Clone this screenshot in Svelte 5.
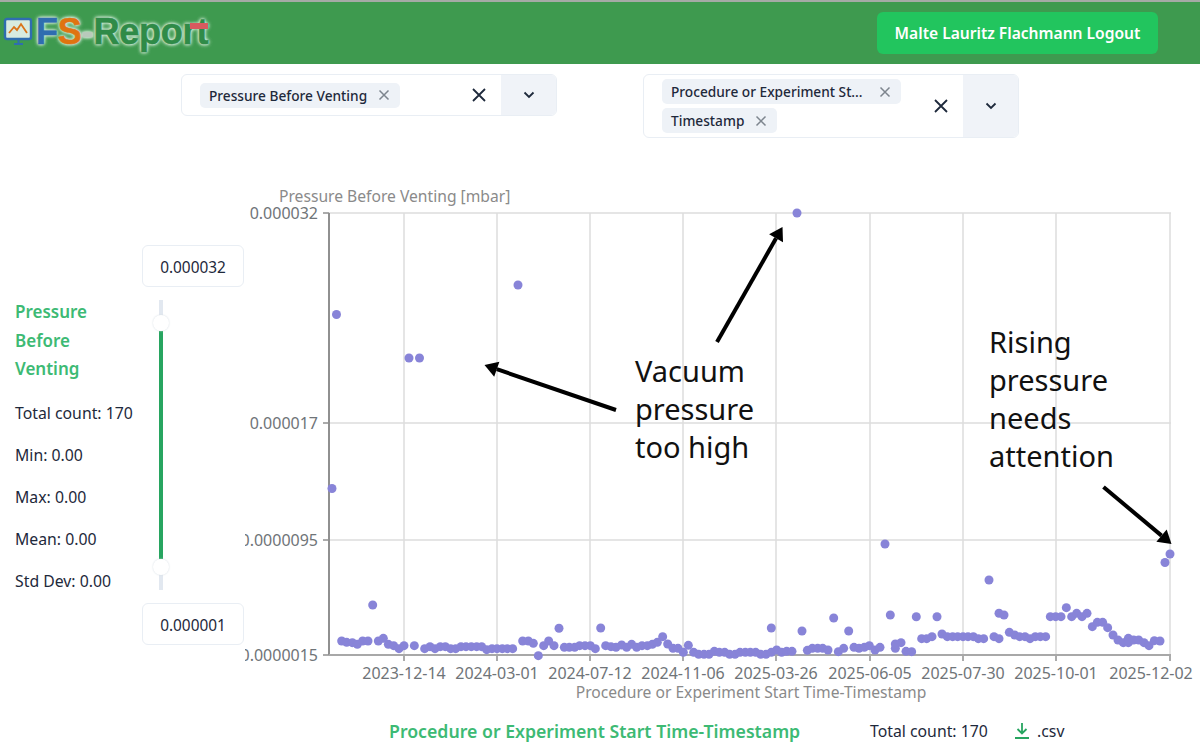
<script lang="ts">
	const toPts = (ox: number, oy: number, list: number[][]) =>
		list.map(([x, y]) => [ox + x / 3, oy + y / 3]);

	const outliers = [
		[332, 488.5], [336.5, 314.5], [409, 358], [419.5, 358], [518, 285], [797, 213], [885, 544], [989, 580],
		[1165, 562.5], [1170, 554], [372.7, 605], [559, 628.3], [600.7, 628], [771.3, 628], [802, 631],
		[833.7, 618], [848.7, 631], [890.3, 615], [916.3, 616.7], [937, 616.7], [999, 613.3], [1004, 615]
	];

	const points = [
		...outliers,
		...toPts(320, 590, [
			[65,153],[80,157],[97,158],[112,163],[128,153],[144,153],[175,153],[190,145],[205,163],[221,167],
			[237,176],[252,167],[283,167],[314,176],[330,170],[345,176],[361,170],[376,170],[392,176],[407,176],
			[423,170],[438,170],[454,170],[470,170],[485,170],[500,179],[516,176],[531,176],[547,176],[562,176],
			[578,176],[608,153],[625,153],[640,160],[655,197],[671,167],[686,153],[702,167],[733,172],[748,172],
			[764,172],[779,167],[795,167],[811,167],[826,176],[857,167],[873,170],[888,172]
		]),
		...toPts(620, 590, [
			[5,165],[20,172],[35,163],[50,172],[66,167],[82,167],[97,163],[112,157],[128,140],[143,162],
			[159,175],[174,175],[190,187],[205,166],[221,187],[236,193],[252,193],[267,193],[283,184],[298,187],
			[314,187],[329,193],[345,193],[360,187],[376,187],[391,187],[407,187],[422,193],[438,193],[454,187],
			[470,180],[485,187],[500,184],[516,184],[562,181],[577,175],[593,175],[608,175],[624,180],[655,185],
			[671,175],[702,172],[717,175],[733,172],[748,167],[765,180],[780,172],[826,175],[826,162],[843,158],[858,184]
		]),
		...toPts(910, 590, [
			[5,185],[35,146],[50,146],[66,140],[96,132],[112,140],[128,140],[143,140],[159,140],[174,140],
			[190,140],[205,146],[221,146],[252,140],[267,146],[298,127],[314,135],[329,140],[345,140],[360,146],
			[376,140],[391,140],[407,140],[421,80],[437,80],[453,80],[469,53],[485,80],[500,70],[516,80],
			[531,70],[547,110],[562,97],[578,97],[593,113],[609,135],[624,150],[640,158],[655,145],[655,158],
			[671,150],[686,150],[702,158],[717,167],[733,152],[750,153]
		])
	];

	// chart svg starts at page x 245, y 180
	const ox = 245;
	const oy = 180;
	const left = 329 - ox;
	const right = 1171 - ox;
	const top = 213 - oy;
	const bottom = 655 - oy;

	const xTicks = [
		{ x: 404, cx: 404, label: '2023-12-14' },
		{ x: 497, cx: 497, label: '2024-03-01' },
		{ x: 590, cx: 590, label: '2024-07-12' },
		{ x: 683, cx: 683, label: '2024-11-06' },
		{ x: 776, cx: 776, label: '2025-03-26' },
		{ x: 870, cx: 870, label: '2025-06-05' },
		{ x: 963, cx: 963, label: '2025-07-30' },
		{ x: 1056, cx: 1056, label: '2025-10-01' },
		{ x: 1170, cx: 1151, label: '2025-12-02' }
	];
	const yTicks = [
		{ y: 213, label: '0.000032' },
		{ y: 423, label: '0.000017' },
		{ y: 540, label: '0.0000095' },
		{ y: 655, label: '0.0000015' }
	];

	const arrows = [
		{ x1: 616, y1: 410, x2: 484.5, y2: 365 },
		{ x1: 717, y1: 342, x2: 782.5, y2: 227 },
		{ x1: 1103.5, y1: 487, x2: 1171.5, y2: 544 }
	];
	// shaft stops short of the tip, head is a filled triangle
	const arrowParts = arrows.map((a) => {
		const len = Math.hypot(a.x2 - a.x1, a.y2 - a.y1);
		const ux = (a.x2 - a.x1) / len;
		const uy = (a.y2 - a.y1) / len;
		const bx = a.x2 - ux * 13;
		const by = a.y2 - uy * 13;
		return {
			sx: a.x1 - ox,
			sy: a.y1 - oy,
			ex: bx - ox,
			ey: by - oy,
			head: [
				[a.x2 - ox, a.y2 - oy],
				[bx - uy * 8 - ox, by + ux * 8 - oy],
				[bx + uy * 8 - ox, by - ux * 8 - oy]
			]
				.map((p) => p.join(','))
				.join(' ')
		};
	});
</script>

<header class="topbar">
	<div class="logo">
		<svg class="logo-icon" width="30" height="30" viewBox="0 0 30 30">
			<rect x="2" y="2" width="26" height="20" rx="2" fill="#d8ebe0" stroke="#2f6db0" stroke-width="2.4" />
			<path d="M6 16l5-6 3 3 4-6 6 9" fill="none" stroke="#d9731a" stroke-width="1.8" />
			<path d="M11 27h9M15.500 22v5" stroke="#2f6db0" stroke-width="2" />
		</svg>
		<span class="blue">F</span><span class="orange">S</span><span class="dash">-</span><span class="green">Report</span>
		<span class="logo-bar"></span>
	</div>
	<button class="logout" type="button">Malte Lauritz Flachmann Logout</button>
</header>

<section class="selectors">
	<div class="select">
		<div class="tags">
			<span class="tag">Pressure Before Venting
				<svg class="tag-x" width="12" height="12" viewBox="0 0 12 12"><path d="M1.500 1.500l9 9M10.500 1.500l-9 9" /></svg>
			</span>
		</div>
		<svg class="clear" width="16" height="16" viewBox="0 0 16 16"><path d="M2 2l12 12M14 2L2 14" /></svg>
		<div class="caret">
			<svg width="12" height="8" viewBox="0 0 12 8"><path d="M1.500 1.500L6 6l4.500-4.500" /></svg>
		</div>
	</div>
	<div class="select">
		<div class="tags">
			<span class="tag">Procedure or Experiment St...
				<svg class="tag-x wide" width="12" height="12" viewBox="0 0 12 12"><path d="M1.500 1.500l9 9M10.500 1.500l-9 9" /></svg>
			</span>
			<span class="tag">Timestamp
				<svg class="tag-x" width="12" height="12" viewBox="0 0 12 12"><path d="M1.500 1.500l9 9M10.500 1.500l-9 9" /></svg>
			</span>
		</div>
		<svg class="clear" width="16" height="16" viewBox="0 0 16 16"><path d="M2 2l12 12M14 2L2 14" /></svg>
		<div class="caret">
			<svg width="12" height="8" viewBox="0 0 12 8"><path d="M1.500 1.500L6 6l4.500-4.500" /></svg>
		</div>
	</div>
</section>

<main class="content">
	<aside class="side">
		<div class="stats">
			<h2>Pressure Before Venting</h2>
			<p>Total count: 170</p>
			<p>Min: 0.00</p>
			<p>Max: 0.00</p>
			<p>Mean: 0.00</p>
			<p>Std Dev: 0.00</p>
		</div>
		<div class="range">
			<div class="value">0.000032</div>
			<div class="slider">
				<div class="fill"></div>
				<span class="thumb upper"></span>
				<span class="thumb lower"></span>
			</div>
			<div class="value">0.000001</div>
		</div>
	</aside>

	<div class="chart">
		<svg width="955" height="526" viewBox="0 0 955 526">
			<text class="axis-title" x="34" y="22">Pressure Before Venting [mbar]</text>

			{#each xTicks as t}
				<line class="grid" x1={t.x - ox} x2={t.x - ox} y1={top} y2={bottom} />
				<line class="tick" x1={t.x - ox} x2={t.x - ox} y1={bottom} y2={bottom + 6} />
				<text class="tick-label" x={t.cx - ox} y={bottom + 24} text-anchor="middle">{t.label}</text>
			{/each}
			{#each yTicks as t}
				<line class="grid" x1={left} x2={right} y1={t.y - oy} y2={t.y - oy} />
				<line class="tick" x1={left - 6} x2={left} y1={t.y - oy} y2={t.y - oy} />
				<text class="tick-label" x={left - 11} y={t.y - oy + 6} text-anchor="end">{t.label}</text>
			{/each}

			<line class="axis-y" x1={left} x2={left} y1={top} y2={bottom} />
			<line class="axis-x" x1={left} x2={right} y1={bottom} y2={bottom} />

			<text class="axis-title" x="506" y="518" text-anchor="middle">Procedure or Experiment Start Time-Timestamp</text>

			{#each points as p}
				<circle class="dot" cx={p[0] - ox} cy={p[1] - oy} r="4.500" />
			{/each}

			{#each arrowParts as a}
				<line class="arrow" x1={a.sx} y1={a.sy} x2={a.ex} y2={a.ey} />
				<polygon points={a.head} fill="#000" />
			{/each}
		</svg>
		<div class="note vacuum">Vacuum<br />pressure<br />too high</div>
		<div class="note rising">Rising<br />pressure<br />needs<br />attention</div>
	</div>
</main>

<footer class="foot">
	<span class="foot-title">Procedure or Experiment Start Time-Timestamp</span>
	<span class="foot-count">Total count: 170</span>
	<span class="csv">
		<svg width="16" height="18" viewBox="0 0 16 18"><path d="M8 1v10M3.500 7L8 11.500 12.500 7M1 16h14" /></svg>
		.csv
	</span>
</footer>

<style>
	:global(body) {
		margin: 0;
		background: #fff;
		font-family: 'Noto Sans', 'Open Sans', sans-serif;
		color: #1e293b;
		overflow: hidden;
	}
	.topbar {
		box-sizing: border-box;
		height: 64px;
		background: #3e9a4f;
		border-top: 2px solid #a5aaa6;
		display: flex;
		align-items: center;
		justify-content: space-between;
		padding: 0 42px 2px 3px;
	}
	.logo {
		position: relative;
		display: flex;
		align-items: center;
		font-family: 'Liberation Sans', sans-serif;
		font-weight: 700;
		font-size: 36px;
		letter-spacing: -0.2px;
		-webkit-text-stroke: 0.6px currentColor;
		text-shadow: 0 0 2px #cfe9d4, 0 0 3px #cfe9d4, 0 0 4px #cfe9d4, 0 0 4px #cfe9d4;
	}
	.logo-icon {
		margin-right: 3px;
	}
	.blue {
		color: #2f6db0;
	}
	.orange {
		color: #df7410;
	}
	.dash {
		color: #b9c9bb;
	}
	.green {
		color: #2f8b48;
	}
	.logo-bar {
		position: absolute;
		left: 187px;
		top: 12px;
		width: 18px;
		height: 6px;
		background: #d95a5f;
	}
	.logout {
		width: 281px;
		height: 42px;
		margin-top: 1px;
		background: #22c55e;
		color: #fff;
		border: none;
		border-radius: 6px;
		font-family: inherit;
		font-size: 15.600px;
		font-weight: 600;
		padding: 0;
	}
	.selectors {
		display: flex;
		justify-content: center;
		align-items: flex-start;
		gap: 86px;
		padding-top: 10px;
		height: 106px;
		box-sizing: border-box;
	}
	.select {
		box-sizing: border-box;
		width: 376px;
		min-height: 42px;
		display: flex;
		align-items: center;
		border: 1.500px solid #e9eef4;
		border-radius: 6px;
	}
	.tags {
		flex: 1;
		display: flex;
		flex-wrap: wrap;
		gap: 4px 20px;
		padding: 4px 8px 4px 18px;
	}
	.tag {
		display: inline-flex;
		align-items: center;
		justify-content: space-between;
		gap: 11px;
		height: 25px;
		padding: 0 9px;
		background: #eef2f7;
		border-radius: 5px;
		font-size: 13.700px;
		font-weight: 500;
		color: #1e293b;
		white-space: nowrap;
	}
	.tag-x {
		margin-right: 1px;
	}
	.tag-x path {
		stroke: #7d858e;
		stroke-width: 1.500;
		fill: none;
	}
	.tag-x.wide {
		margin-left: 5px;
	}
	.clear {
		margin-right: 14px;
		flex: none;
	}
	.clear path {
		stroke: #1e293b;
		stroke-width: 1.800;
		fill: none;
	}
	.caret {
		align-self: stretch;
		width: 55px;
		flex: none;
		background: #f0f3f8;
		display: flex;
		align-items: center;
		justify-content: center;
		border-radius: 0 5px 5px 0;
	}
	.caret path {
		stroke: #1e293b;
		stroke-width: 1.800;
		fill: none;
	}
	.content {
		display: flex;
		height: 520px;
		margin-top: 10px;
	}
	.side {
		width: 245px;
		flex: none;
		display: flex;
		box-sizing: border-box;
		padding: 65px 0 0 15px;
		position: relative;
	}
	.stats {
		width: 127px;
		padding-top: 53px;
		flex: none;
	}
	.stats h2 {
		margin: 0 0 8px;
		width: 100px;
		font-size: 17px;
		line-height: 28.500px;
		font-weight: 600;
		color: #3dba74;
	}
	.stats p {
		margin: 0;
		height: 42px;
		font-size: 15.800px;
		line-height: 42px;
	}
	.range {
		width: 102px;
		display: flex;
		flex-direction: column;
		gap: 13px;
		align-items: flex-start;
	}
	.value {
		box-sizing: border-box;
		width: 102px;
		height: 42px;
		padding-top: 2px;
		border: 1.500px solid #e9eef4;
		border-radius: 6px;
		display: flex;
		align-items: center;
		justify-content: center;
		font-size: 15.400px;
	}
	.slider {
		position: relative;
		width: 4px;
		height: 290px;
		margin-left: 17px;
		background: #e2e8f0;
	}
	.fill {
		position: absolute;
		left: 0;
		right: 0;
		top: 31px;
		height: 228px;
		background: #27a560;
	}
	.thumb {
		position: absolute;
		left: -6px;
		width: 16px;
		height: 16px;
		border-radius: 50%;
		background: #fff;
		box-shadow: 0 0 2px #d3dbe2;
	}
	.thumb.upper {
		top: 15px;
	}
	.thumb.lower {
		top: 259px;
	}
	.chart {
		position: relative;
		width: 955px;
		height: 520px;
	}
	.chart svg {
		display: block;
		font-family: 'Noto Sans', sans-serif;
	}
	.axis-title {
		font-size: 15.650px;
		fill: #8a8a8a;
	}
	.tick-label {
		font-size: 16px;
		fill: #6f7478;
	}
	.grid {
		stroke: #dcdcdc;
		stroke-width: 1.500;
	}
	.tick {
		stroke: #8f8f8f;
		stroke-width: 1.500;
	}
	.axis-y {
		stroke: #909090;
		stroke-width: 2;
	}
	.axis-x {
		stroke: #a8a8a8;
		stroke-width: 2;
	}
	.dot {
		fill: #8884d8;
	}
	.arrow {
		stroke: #000;
		stroke-width: 4;
	}
	.note {
		position: absolute;
		font-size: 29px;
		line-height: 38px;
		color: #111;
	}
	.vacuum {
		left: 390px;
		top: 172px;
	}
	.rising {
		left: 744px;
		top: 143px;
	}
	.foot {
		display: flex;
		align-items: center;
		height: 24px;
		margin-top: 19px;
		padding-left: 389px;
	}
	.foot-title {
		font-size: 17.700px;
		font-weight: 600;
		color: #3dba74;
		width: 481px;
		white-space: nowrap;
	}
	.foot-count {
		font-size: 15.800px;
		width: 144px;
	}
	.csv {
		display: inline-flex;
		align-items: center;
		gap: 7px;
		font-size: 15.800px;
	}
	.csv path {
		stroke: #27a560;
		stroke-width: 1.800;
		fill: none;
	}
</style>
